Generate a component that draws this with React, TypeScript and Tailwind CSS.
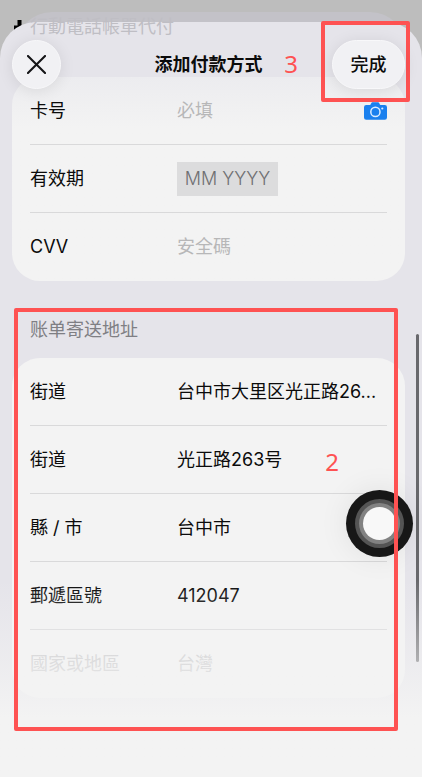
import React from "react";
import clsx from "clsx";

interface FieldRowProps {
  id: string;
  label: string;
  faded?: boolean;
  last?: boolean;
  children: React.ReactNode;
}

function FieldRow({ id, label, faded, last, children }: FieldRowProps) {
  return (
    <div
      className={clsx(
        "flex h-17 items-center",
        !last && "border-b border-[#d9d9da]"
      )}
    >
      <label
        htmlFor={id}
        className={clsx("w-[147px] shrink-0", faded && "text-[#c4c4c6]")}
      >
        {label}
      </label>
      {children}
    </div>
  );
}

const inputClass =
  "min-w-0 flex-1 bg-transparent text-ellipsis outline-none placeholder:text-[#b7b7b8]";

function CameraIcon() {
  return (
    <svg viewBox="0 0 23 18" className="h-[18px] w-[23px]" aria-hidden="true">
      <path
        d="M2.2 3h3.300c.8 0 1.100-.5 1.500-1.300.5-1.100 1-1.500 2-1.500h4.500c1 0 1.500.4 2 1.500.4.8.7 1.300 1.500 1.300h3.800a2.200 2.200 0 0 1 2.200 2.200v10.300a2.200 2.200 0 0 1-2.200 2.200h-18.600a2.200 2.200 0 0 1-2.200-2.200v-10.300a2.200 2.200 0 0 1 2.200-2.200z"
        fill="#1a80ee"
      />
      <circle cx="11.400" cy="9.900" r="4.600" fill="none" stroke="#dcecff" strokeWidth="1.500" />
      <circle cx="18.300" cy="6.500" r="1.100" fill="#dcecff" />
    </svg>
  );
}

function FloatingButton() {
  return (
    <button
      type="button"
      aria-label="AssistiveTouch"
      className="absolute top-[490px] right-[9px] flex size-[67px] items-center justify-center rounded-full bg-[#171717] shadow-[0_0_30px_rgba(0,0,0,0.08)]"
    >
      <span className="flex size-[49px] items-center justify-center rounded-full bg-[#545454]">
        <span className="flex size-[41px] items-center justify-center rounded-full bg-[#828282]">
          <span className="size-[33px] rounded-full bg-[#f8f8f8]" />
        </span>
      </span>
    </button>
  );
}

const glassButton =
  "flex h-[49px] items-center justify-center rounded-full border border-[#f8f8fa] bg-[#f1f1f4] shadow-[0_2px_16px_rgba(0,0,0,0.09)]";

export default function App() {
  return (
    <div className="relative flex min-h-screen flex-col overflow-hidden bg-[#bdbdbd] pt-3 font-['Inter','Noto_Sans_CJK_SC',sans-serif] text-lg leading-7 text-[#0b0b0b]">
      {/* Sheet underneath, dimmed */}
      <div className="mx-4 h-[10px]">
        <div className="h-15 rounded-t-[36px] bg-[#c3c2c8]" />
      </div>
      <svg
        viewBox="0 0 8 10"
        className="absolute top-5 left-[14px] h-[10px] w-2"
        aria-hidden="true"
      >
        <path d="M3.500 0h4v7h-3.500v3h-4v-4.500h3.500z" fill="#000" />
      </svg>

      <main className="relative flex-1 rounded-t-[36px] bg-[#e5e4ea] pt-[18px]">
        <p className="absolute -top-[9px] left-[30px] text-[#bfbec4]">
          行動電話帳單代付
        </p>

        <header className="relative z-10 flex items-center justify-between pr-[17px] pl-3">
          <div className="flex w-[73px]">
            <button
              type="button"
              aria-label="關閉"
              className={clsx(glassButton, "w-[49px]")}
            >
              <svg
                viewBox="0 0 20 20"
                className="size-[19px]"
                fill="none"
                stroke="#151517"
                strokeWidth="2.2"
                strokeLinecap="round"
                aria-hidden="true"
              >
                <path d="M1 1l18 18M19 1L1 19" />
              </svg>
            </button>
          </div>
          <h1 className="font-bold">添加付款方式</h1>
          <button
            type="button"
            className={clsx(glassButton, "w-[73px] font-medium")}
          >
            完成
          </button>
        </header>

        <form className="-mt-3 pr-[17px] pl-3">
          <section className="rounded-[28px] bg-[#f3f3f3] bg-linear-to-b from-[#ececef] to-[#f3f3f3] to-25% px-[18px]">
            <FieldRow id="card" label="卡号">
              <input id="card" className={inputClass} placeholder="必填" />
              <button type="button" aria-label="掃描卡片">
                <CameraIcon />
              </button>
            </FieldRow>
            <FieldRow id="expiry" label="有效期">
              <input
                id="expiry"
                className="h-[34px] w-[101px] bg-[#dcdcdd] text-center font-light outline-none placeholder:text-[#6f6f72]"
                placeholder="MM YYYY"
              />
            </FieldRow>
            <FieldRow id="cvv" label="CVV" last>
              <input id="cvv" className={inputClass} placeholder="安全碼" />
            </FieldRow>
          </section>

          <h2 className="px-[18px] pt-[35px] pb-[14px] text-[#7f7f84]">
            账单寄送地址
          </h2>

          <section className="rounded-[28px] bg-[#f3f3f3] px-[18px]">
            <FieldRow id="street1" label="街道">
              <input
                id="street1"
                className={inputClass}
                defaultValue="台中市大里区光正路26..."
              />
            </FieldRow>
            <FieldRow id="street2" label="街道">
              <input
                id="street2"
                className={inputClass}
                defaultValue="光正路263号"
              />
            </FieldRow>
            <FieldRow id="city" label="縣 / 市">
              <input id="city" className={inputClass} defaultValue="台中市" />
            </FieldRow>
            <FieldRow id="zip" label="郵遞區號">
              <input id="zip" className={inputClass} defaultValue="412047" />
            </FieldRow>
            <FieldRow id="country" label="國家或地區" faded last>
              <select
                id="country"
                className="flex-1 appearance-none bg-transparent text-[#c4c4c6] outline-none"
              >
                <option>台灣</option>
              </select>
            </FieldRow>
          </section>
        </form>
      </main>

      {/* Scroll indicator */}
      <div className="absolute top-[334px] right-[3px] h-[328px] w-[3px] rounded-full bg-[#68686c]" />

      {/* Bottom fade */}
      <div className="pointer-events-none absolute inset-x-0 bottom-0 h-[197px] bg-linear-to-b from-transparent via-[#f3f3f3]/50 via-40% to-[#f3f3f3] to-70%" />

      <FloatingButton />

      {/* Step markers */}
      <div className="pointer-events-none absolute top-[308px] right-6 left-[14px] h-[423px] rounded-xs border-4 border-[#fe5252]" />
      <div className="pointer-events-none absolute top-[21px] right-3 h-[81px] w-[89px] rounded-xs border-4 border-[#fe5252]" />
      <span className="absolute top-12 right-[124px] font-['Noto_Sans',sans-serif] text-2xl leading-8 text-[#fe5252]">
        3
      </span>
      <span className="absolute top-[446px] right-[83px] font-['Noto_Sans',sans-serif] text-2xl leading-8 text-[#fe5252]">
        2
      </span>
    </div>
  );
}
